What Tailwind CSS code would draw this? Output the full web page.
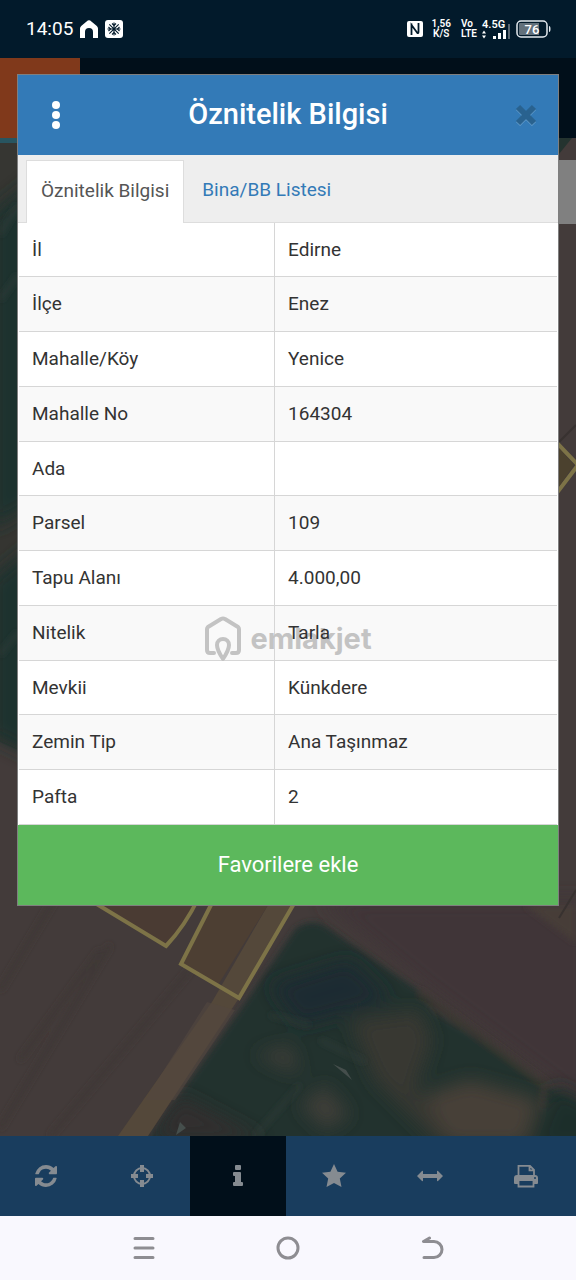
<!DOCTYPE html>
<html lang="tr">
<head>
    <meta charset="UTF-8">
    <meta name="viewport" content="width=device-width, initial-scale=1.0">
    <title>Öznitelik Bilgisi</title>
    <script src="https://cdn.jsdelivr.net/npm/@tailwindcss/browser@4"></script>
</head>
<body class="relative flex min-h-screen flex-col overflow-x-hidden bg-[#433b39] font-['Roboto',sans-serif] text-[19px] text-[#333333]">

    <!-- Phone status bar -->
    <header class="flex h-[58px] items-center justify-between bg-[#021a2b] pl-[26px] pr-[25px] text-white">
        <div class="flex items-center gap-[7px]">
            <span class="text-[19px]">14:05</span>
            <svg class="h-[18px] w-[18px]" viewBox="0 0 18 18" fill="currentColor"><path d="M0 8.500Q0 7 1.200 6L7.800.6Q9-.3 10.200.6L16.800 6Q18 7 18 8.500V18H13V12A4 4 0 0 0 5 12V18H0z"/></svg>
            <svg class="h-[18px] w-[18px]" viewBox="0 0 18 18"><rect width="18" height="18" rx="3" fill="#fff"/><g stroke="#021a2b" stroke-width="1.100" fill="none"><path d="M9 2.500V15.500M2.500 9H15.500M4.300 4.300 13.700 13.700M13.700 4.300 4.300 13.700"/><path d="M7 3.500 9 5.500 11 3.500M7 14.500 9 12.500 11 14.500M3.500 7 5.500 9 3.500 11M14.500 7 12.500 9 14.500 11"/></g></svg>
        </div>
        <div class="flex items-center text-[10px] font-semibold leading-[10px]">
            <svg class="mr-2 h-4 w-4" viewBox="0 0 16 16"><rect width="16" height="16" rx="2" fill="#fff"/><path d="M4.500 14V4L10 11.500Q11.500 13 11.500 11V2M4.500 4V2.500" fill="none" stroke="#021a2b" stroke-width="1.800"/></svg>
            <div class="mr-[10px] text-center">1,56<br>K/S</div>
            <div class="mr-[5px]">Vo<br>LTE</div>
            <div class="mr-[5px]">
                <div class="text-[11px] leading-[10px]">4.5G</div>
                <svg class="h-[9px] w-[29px] overflow-visible" viewBox="0 0 29 9" fill="#fff"><path d="M0 3.500 2 .5 4 3.500zM0 5.500H4L2 8.500zM11 6H14V9H11zM16 3H19V9H16zM21 0H24V9H21z"/><path d="M26-6H28V9H26z" fill="#5b6771"/></svg>
            </div>
            <svg class="h-[18px] w-[35px]" viewBox="0 0 35 18"><rect x="1" y="1" width="30" height="16" rx="4" fill="none" stroke="#e4eaf0" stroke-width="1.500"/><path d="M4 3H23V15H4Q3 15 3 14V4Q3 3 4 3" fill="#62707b"/><path d="M33 6Q34.500 6 34.500 9T33 12z" fill="#e4eaf0"/><text x="16" y="14" text-anchor="middle" font-size="13" font-weight="500" fill="#fff">76</text></svg>
        </div>
    </header>

    <!-- Dimmed app header -->
    <div class="flex h-20 bg-[#010f1a]">
        <div class="w-20 bg-[#80391b]"></div>
    </div>

    <!-- Satellite map -->
    <main class="relative flex-1 overflow-hidden">
        <svg class="absolute inset-0 h-full w-full" viewBox="0 138 576 998" preserveAspectRatio="xMidYMin slice">
            <defs>
                <filter id="soft"><feGaussianBlur stdDeviation="3"/></filter>
                <filter id="haze" x="-20%" y="-20%" width="140%" height="140%"><feGaussianBlur stdDeviation="9"/></filter>
            </defs>
            <rect y="138" width="576" height="998" fill="#433b3a"/>
            <path d="M0 138H40V760L0 742z" fill="#363632"/>
            <path d="M-10 215 40 175V500L-10 530zM-10 580 40 540V760L-10 735z" fill="#1e302f" filter="url(#haze)"/>
            <path d="M0 138H80V143H0z" fill="#285560"/>
            <path d="M0 235 18 205M0 300 18 275M0 655 18 632" stroke="#3d4340" stroke-width="2" filter="url(#soft)"/>
            <path d="M320 900H590V1110L430 990z" fill="#403637" filter="url(#haze)"/>
            <path d="M559 138H572L559 154z" fill="#24332f"/>
            <path d="M525 905 576 943V905z" fill="#463e39" filter="url(#soft)"/>
            <path d="M559 918 576 890M559 442 576 425" stroke="#383230" stroke-width="2"/>
            <path d="M0 990 60 890M0 1128 110 945M50 1136 190 970M20 1060 100 950" stroke="#3b3433" stroke-width="3" fill="none" filter="url(#soft)"/>
            <g filter="url(#soft)">
                <path d="M296 928Q312 918 325 926L418 990 432 1010 545 1085 590 1115V1150H140L240 1010z" fill="#22302f"/>
                <path d="M418 992 545 1085 542 1110" fill="none" stroke="#3a3732" stroke-width="7"/>
            </g>
            <g filter="url(#haze)">
                <path d="M350 1020 420 1010 432 1040 415 1090 470 1140H435L375 1080z" fill="#373733"/>
                <path d="M425 1095 470 1080 540 1100 525 1145H450z" fill="#463f37"/>
                <path d="M300 1105 325 1085 350 1115 325 1130zM255 1055 290 1045 300 1075z" fill="#3c3e37"/>
                <path d="M180 1095 265 1140H150z" fill="#302f2e"/>
                <path d="M270 985 350 960 390 1000 300 1025z" fill="#1f2c31"/>
                <path d="M555 1085 600 1110V1150H530z" fill="#1d2e2b"/>
            </g>
            <path d="M300 1085 255 1136M270 1015 310 1025M320 1040 365 1062" fill="none" stroke="#35403b" stroke-width="2" filter="url(#soft)"/>
            <path d="M333 1064 352 1080 346 1070zM176 1135 186 1128 180 1122z" fill="#454e4c"/>
            <path d="M268 905H294L239 998 148 1136H118L212 1002z" fill="#54483a"/>
            <path d="M207 1002 235 1010 175 1100H145z" fill="#534740" opacity=".6"/>
            <path d="M212 905H268L218 985 181 964z" fill="#4d3f33"/>
            <path d="M98 905 166 947 198 905z" fill="#4a3b33"/>
            <path d="M90 900 166 946Q185 926 199 897M215 897 181 964 239 998 299 895M556 442 578 465 556 494" fill="none" stroke="#7d7347" stroke-width="4"/>
            <path d="M558 447 574 465 558 488z" fill="#4b412e"/>
            <rect x="540" y="160" width="36" height="64" fill="#808080"/>
        </svg>
    </main>

    <!-- Map tools -->
    <nav class="bg-[#193d5e] text-[#858b91]">
        <div class="-ml-0.5 mr-0.5 grid h-20 grid-cols-6">
            <button type="button" aria-label="Yenile" class="grid place-items-center">
                <svg class="h-[22px] w-[22px]" viewBox="0 0 1536 1536" fill="currentColor"><path d="M1511 928q0 5-1 7-64 268-268 434.500T764 1536q-146 0-282.500-55T238 1324l-129 129q-19 19-45 19t-45-19-19-45V960q0-26 19-45t45-19h448q26 0 45 19t19 45-19 45l-137 137q71 66 161 102t187 36q134 0 250-65t186-179q11-17 53-117 8-23 30-23h192q13 0 22.500 9.500t9.500 22.500zm25-800v448q0 26-19 45t-45 19h-448q-26 0-45-19t-19-45 19-45l138-138Q969 256 768 256q-134 0-250 65T332 500q-11 17-53 117-8 23-30 23H50q-13 0-22.500-9.500T18 608v-7q65-268 270-434.500T768 0q146 0 284 55.500T1297 212l130-129q19-19 45-19t45 19 19 45z"/></svg>
            </button>
            <button type="button" aria-label="Konum" class="grid place-items-center">
                <svg class="h-6 w-6" viewBox="0 0 24 24" fill="none" stroke="currentColor"><circle cx="12" cy="12" r="8" stroke-width="2"/><path d="M12 1V8M12 16V23M1 12H8M16 12H23" stroke-width="4"/></svg>
            </button>
            <button type="button" aria-label="Bilgi" class="grid place-items-center bg-[#010f1a]">
                <svg class="h-6 w-6" viewBox="0 0 24 24" fill="currentColor"><path d="M9 2Q9 1 10 1H14Q15 1 15 2V5Q15 6 14 6H10Q9 6 9 5zM7 9Q7 8 8 8H14Q15 8 15 9V18H16Q17 18 17 19V21Q17 22 16 22H8Q7 22 7 21V19Q7 18 8 18H9V12H8Q7 12 7 11z"/></svg>
            </button>
            <button type="button" aria-label="Favoriler" class="grid place-items-center">
                <svg class="h-6 w-6" viewBox="0 0 24 24" fill="currentColor"><path d="M12 0 15.600 7.800 24 8.800 17.800 14.600 19.500 23 12 19 4.500 23 6.200 14.600 0 8.800 8.400 7.800z"/></svg>
            </button>
            <button type="button" aria-label="Ölçüm" class="grid place-items-center">
                <svg class="h-6 w-[26px]" viewBox="0 0 26 24" fill="currentColor"><path d="M0 12 5 7Q6 6.500 6 7.500V10H20V7.500Q20 6.500 21 7L26 12 21 17Q20 17.500 20 16.500V14H6V16.500Q6 17.500 5 17z"/></svg>
            </button>
            <button type="button" aria-label="Yazdır" class="grid place-items-center">
                <svg class="h-6 w-6" viewBox="0 0 24 24"><path d="M4.500 12V1.800H16L20 5.800V12M15.500 2V6.300H20" fill="none" stroke="currentColor" stroke-width="1.800"/><path d="M3 11H21Q24 11 24 14V19Q24 20 23 20H20V17H4V20H1Q0 20 0 19V14Q0 11 3 11" fill="currentColor"/><path d="M4.500 17V22.500H19.500V17" fill="none" stroke="currentColor" stroke-width="1.800"/><circle cx="21" cy="14" r="1" fill="#193d5e"/></svg>
            </button>
        </div>
    </nav>

    <!-- Android navigation -->
    <nav class="flex h-16 items-center justify-center gap-[120px] bg-[#f9f8fe] text-[#8e8d92]">
        <button type="button" aria-label="Son uygulamalar">
            <svg class="h-6 w-6" viewBox="0 0 24 24" fill="none" stroke="currentColor" stroke-width="3" stroke-linecap="round"><path d="M3 2.500H21M3 12H21M3 21.500H21"/></svg>
        </button>
        <button type="button" aria-label="Ana ekran">
            <svg class="h-6 w-6" viewBox="0 0 24 24" fill="none" stroke="currentColor" stroke-width="3"><circle cx="12" cy="12" r="10"/></svg>
        </button>
        <button type="button" aria-label="Geri">
            <svg class="h-6 w-6" viewBox="0 0 24 24" fill="none" stroke="currentColor" stroke-width="3" stroke-linecap="round" stroke-linejoin="round"><path d="M9.500 2 3.500 5.500H14A8 8 0 0 1 14 21.500H4"/></svg>
        </button>
    </nav>

    <!-- Attribute dialog -->
    <section role="dialog" aria-labelledby="dialog-title" class="absolute inset-x-[17px] top-[74px] border border-black/50 bg-white">
        <div class="grid h-20 grid-cols-[76px_1fr_76px] items-center bg-[#337ab7] text-white">
            <button type="button" aria-label="Menü" class="flex flex-col items-center gap-[2px]">
                <span class="h-2 w-2 rounded-full bg-white"></span>
                <span class="h-2 w-2 rounded-full bg-white"></span>
                <span class="h-2 w-2 rounded-full bg-white"></span>
            </button>
            <h1 id="dialog-title" class="text-center text-[29px] font-medium">Öznitelik Bilgisi</h1>
            <button type="button" aria-label="Kapat" class="justify-self-end pr-[21px] text-[#29628f]">
                <svg class="h-[22px] w-[22px]" viewBox="0 0 22 22" fill="none" stroke-width="6"><path d="M3 4 19 20M19 4 3 20" stroke="#5f99c8"/><path d="M3 3 19 19M19 3 3 19" stroke="currentColor"/></svg>
            </button>
        </div>

        <div role="tablist" class="flex h-[68px] border-b border-[#dddddd] bg-[#eeeeee] pl-2 pt-[5px]">
            <button type="button" role="tab" aria-selected="true" class="-mb-px border border-b-0 border-[#dddddd] bg-white px-[14px] pb-0.5 text-[#555555]">Öznitelik Bilgisi</button>
            <button type="button" role="tab" aria-selected="false" class="px-[18px] pb-0.5 text-[#337ab7]">Bina/BB Listesi</button>
        </div>

        <div class="relative px-px">
            <table class="h-[602px] w-full table-fixed border-collapse text-left">
                <colgroup>
                    <col class="w-[47.5%]">
                    <col>
                </colgroup>
                <tbody class="[&_td]:border-l [&_td]:border-[#d6d6d6] [&_td]:px-[13px] [&_td]:pt-px [&_th]:px-[13px] [&_th]:pt-px [&_th]:font-normal [&_tr]:border-b [&_tr]:border-[#d6d6d6] [&_tr:nth-child(even)]:bg-[#f9f9f9]">
                    <tr><th scope="row">İl</th><td>Edirne</td></tr>
                    <tr><th scope="row">İlçe</th><td>Enez</td></tr>
                    <tr><th scope="row">Mahalle/Köy</th><td>Yenice</td></tr>
                    <tr><th scope="row">Mahalle No</th><td>164304</td></tr>
                    <tr><th scope="row">Ada</th><td></td></tr>
                    <tr><th scope="row">Parsel</th><td>109</td></tr>
                    <tr><th scope="row">Tapu Alanı</th><td>4.000,00</td></tr>
                    <tr><th scope="row">Nitelik</th><td><span class="relative z-10">Tarla</span></td></tr>
                    <tr><th scope="row">Mevkii</th><td>Künkdere</td></tr>
                    <tr><th scope="row">Zemin Tip</th><td>Ana Taşınmaz</td></tr>
                    <tr><th scope="row">Pafta</th><td>2</td></tr>
                </tbody>
            </table>
            <!-- Watermark -->
            <div class="pointer-events-none absolute inset-x-0 top-[393px] flex items-center justify-center gap-2 text-[#c3c3c3]">
                <svg class="h-[46px] w-[38px]" viewBox="0 0 38 46" fill="none" stroke="currentColor" stroke-width="4" stroke-linejoin="round" stroke-linecap="round"><path d="M10 37H6Q3 37 3 34V13Q3 12 4 11L17 3Q19 2 21 3L34 11Q35 12 35 13V34Q35 37 32 37H28"/><path d="M19 43Q13 34 13 29A6 6 0 0 1 25 29Q25 34 19 43z"/></svg>
                <span class="font-['Inter',sans-serif] text-[29px] font-bold leading-[38px]">emlakjet</span>
            </div>
        </div>

        <button type="button" class="h-20 w-full bg-[#5cb85c] pb-0.5 text-[22px] text-white">Favorilere ekle</button>
    </section>

</body>
</html>
